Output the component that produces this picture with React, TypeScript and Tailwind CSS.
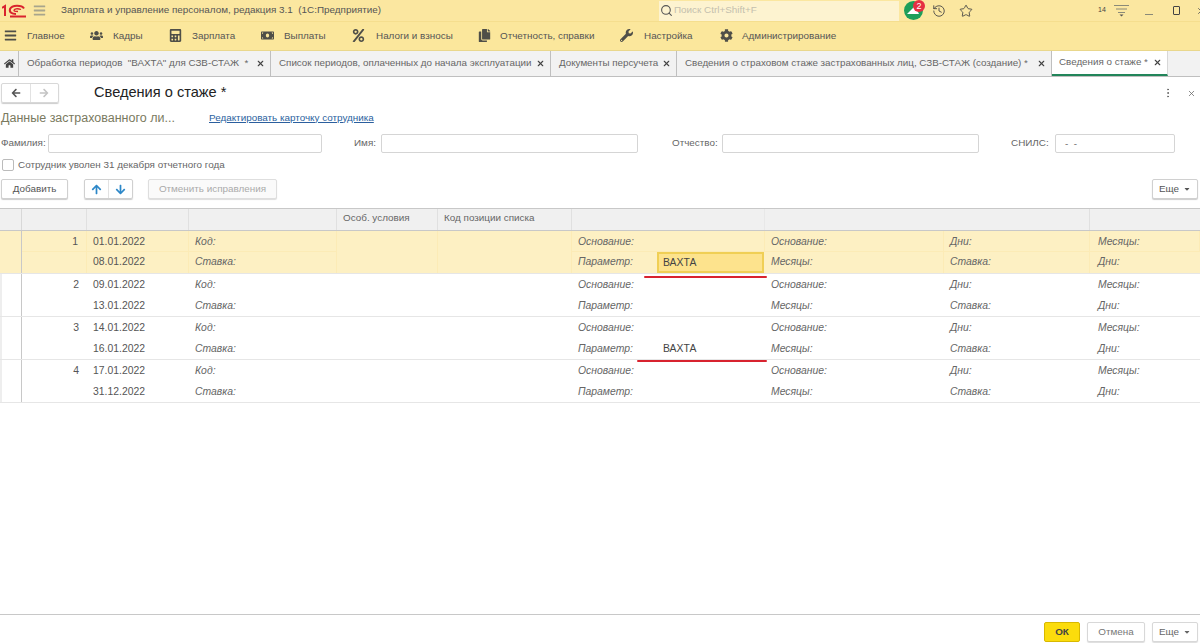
import { History, MoreVertical, Search, Star, X } from "lucide-react";
import { FaArrowDown, FaArrowLeft, FaArrowRight, FaArrowUp, FaBars, FaCalculator, FaCaretDown, FaCog, FaCopy, FaHome, FaMoneyBill, FaPercent, FaUsers, FaWrench } from "react-icons/fa";

const menuItems = [
  { label: "Главное", icon: FaBars, w: "w-[86px]", gap: "gap-[10px]" },
  { label: "Кадры", icon: FaUsers, w: "w-[79px]", gap: "gap-[10px]" },
  { label: "Зарплата", icon: FaCalculator, w: "w-[92px]", gap: "gap-[10px]" },
  { label: "Выплаты", icon: FaMoneyBill, w: "w-[91px]", gap: "gap-[10px]" },
  { label: "Налоги и взносы", icon: FaPercent, w: "w-[126px]", gap: "gap-[11px]" },
  { label: "Отчетность, справки", icon: FaCopy, w: "w-[142px]", gap: "gap-[9px]" },
  { label: "Настройка", icon: FaWrench, w: "w-[100px]", gap: "gap-[11px]" },
  { label: "Администрирование", icon: FaCog, w: "w-[130px]", gap: "gap-[9px]" },
];

const tabs = [
  { label: 'Обработка периодов  "ВАХТА" для СЗВ-СТАЖ  *', w: "w-[252px]" },
  { label: "Список периодов, оплаченных до начала эксплуатации", w: "w-[280px]" },
  { label: "Документы персучета", w: "w-[126px]" },
  { label: "Сведения о страховом стаже застрахованных лиц, СЗВ-СТАЖ (создание) *", w: "w-[375px]" },
];

const rows = [
  { n: "1", from: "01.01.2022", to: "08.01.2022", selected: true },
  { n: "2", from: "09.01.2022", to: "13.01.2022" },
  { n: "3", from: "14.01.2022", to: "16.01.2022", marked: true },
  { n: "4", from: "17.01.2022", to: "31.12.2022" },
];

const gridCols = "grid-cols-[22px_65px_102px_148px_101px_134px_193px_179px_146px_110px]";

function Label({ children }: { children: string }) {
  return <span className="italic text-[#666]">{children}</span>;
}

function Logo() {
  return (
    <svg width="24" height="14" viewBox="0 0 24 14" fill="none" stroke="#d9232e" strokeWidth="2">
      <path d="M0 4 L3 2 V12" />
      <path d="M22 4.5 C20 1 10 0.5 8 5 C7 8.5 10 10 14 10" />
      <path d="M19 5.5 C15 4 12 5 12 6.5 C12 7.5 14 7.5 16 7.5" strokeWidth="1.3" />
      <path d="M8 12.5 H24" />
    </svg>
  );
}

function Bell() {
  return (
    <div className="relative w-[19px] h-[19px] rounded-full bg-[#1e9e5a] flex items-center justify-center shrink-0">
      <svg width="13" height="12" viewBox="0 0 13 12" fill="#fff">
        <path d="M0 9 L8 1 L12 9 Z" />
      </svg>
      <span className="absolute -top-[1px] -right-[2px] w-[12px] h-[12px] rounded-full bg-[#e53042] text-white text-[9px] leading-[12px] text-center">2</span>
    </div>
  );
}

function FilterIcon() {
  return (
    <svg width="15" height="13" viewBox="0 0 15 13" fill="none" stroke="#8a8a78" strokeWidth="1" className="shrink-0">
      <path d="M0 1.5 H15 M2 5 H13 M4 8.5 H11" />
      <path d="M5.5 10.5 H9.5 L7.5 12.5 Z" fill="#555" stroke="none" />
    </svg>
  );
}

function TableRow({ row }: { row: (typeof rows)[number] }) {
  const line = row.selected ? "border-b border-r border-[#fcebb6]" : "";
  const plain = row.selected ? "border-r border-[#fcebb6]" : "";
  const second = row.selected ? "pt-[2px]" : "pt-[3px]";
  return (
    <div className={`grid ${gridCols} grid-rows-[21px_21px] h-[43px] border-b border-[#e6e6e6] text-[10.4px] text-[#555] ${row.selected ? "bg-[#fdf0c3]" : "bg-white"}`}>
      <div className={`row-span-2 border-r border-r-[#c8c8c8] border-l-2 ${row.selected ? "border-l-[#fdf0c3]" : "border-l-[#eeeeee]"}`} />
      <div className={`text-right pr-[8px] pt-[3px] ${line}`}>{row.n}</div>
      <div className={`pl-[6px] pt-[3px] ${line}`}>{row.from}</div>
      <div className={`pl-[6px] pt-[3px] ${line}`}><Label>Код:</Label></div>
      <div className={`row-span-2 ${plain}`} />
      <div className={`row-span-2 ${plain}`} />
      <div className={`pl-[6px] pt-[3px] ${line}`}><Label>Основание:</Label></div>
      <div className={`pl-[6px] pt-[3px] ${line}`}><Label>Основание:</Label></div>
      <div className={`pl-[6px] pt-[3px] ${line}`}><Label>Дни:</Label></div>
      <div className={`pl-[8px] pt-[3px] ${line}`}><Label>Месяцы:</Label></div>

      <div className={`col-start-2 ${plain}`} />
      <div className={`pl-[6px] ${second} ${plain}`}>{row.to}</div>
      <div className={`pl-[6px] ${second} ${plain}`}><Label>Ставка:</Label></div>
      <div className={`relative flex pl-[6px] ${second}`}>
        <Label>Параметр:</Label>
        {row.selected && (
          <div className="absolute left-[85px] top-[0px] w-[107px] h-[21px] bg-[#fde38d] border-2 border-[#f0cf55] pl-[4px] leading-[17px] text-[#444]">ВАХТА</div>
        )}
        {row.marked && <span className="absolute left-[91px] top-[3px] text-[#444]">ВАХТА</span>}
        {row.selected && <div className="absolute left-[72px] top-[24px] w-[123px] h-[2px] bg-[#d8232f] rounded-full" />}
        {row.marked && <div className="absolute left-[65px] top-[22px] w-[130px] h-[2px] bg-[#d8232f] rounded-full" />}
      </div>
      <div className={`pl-[6px] ${second} ${plain}`}><Label>Месяцы:</Label></div>
      <div className={`pl-[6px] ${second} ${plain}`}><Label>Ставка:</Label></div>
      <div className={`pl-[8px] ${second}`}><Label>Дни:</Label></div>
    </div>
  );
}

function Field({ w }: { w: string }) {
  return <div className={`${w} h-[19px] bg-white border border-[#d5d5d5] rounded-[2px] shrink-0`} />;
}

export default function App() {
  return (
    <div className="w-[1200px] h-[643px] flex flex-col overflow-hidden bg-white font-['Liberation_Sans',Arial,sans-serif] text-[9.9px] text-[#666]">
      {/* Title bar */}
      <div className="h-[22px] flex items-center bg-[#fbe7a0] border-b border-[#f5de8e] shrink-0">
        <div className="w-[33px] pl-[2px] flex shrink-0"><Logo /></div>
        <FaBars size={13} className="text-[#a8a58c] shrink-0" />
        <span className="ml-[15px] w-[598px] shrink-0 whitespace-pre text-[#555]">Зарплата и управление персоналом, редакция 3.1  (1С:Предприятие)</span>
        <div className="w-[240px] h-[20px] bg-[#fdf3d0] flex items-center text-[#c4c0ae] pl-[1px] shrink-0">
          <Search size={13} className="text-[#555] mr-[1px]" />
          Поиск Ctrl+Shift+F
        </div>
        <div className="ml-[5px] shrink-0"><Bell /></div>
        <History size={14} className="ml-[9px] text-[#444] shrink-0" strokeWidth={1.5} />
        <Star size={14} className="ml-[13px] text-[#444] shrink-0" strokeWidth={1.5} />
        <span className="ml-[125px] text-[7px] text-[#444] shrink-0">14</span>
        <div className="ml-[8px]"><FilterIcon /></div>
        <div className="ml-[16px] mt-[8px] w-[8px] h-[1px] bg-[#8a8a78] shrink-0" />
        <div className="ml-[20px] w-[7px] h-[9px] border border-[#444] rounded-[1px] shrink-0" />
        <X size={10} className="ml-[16px] text-[#555] shrink-0" />
      </div>

      {/* Section menu */}
      <div className="h-[29px] flex items-center bg-[#fbe79c] border-b border-[#e9d78c] shrink-0 pl-[4px]">
        {menuItems.map((item) => {
          const Icon = item.icon;
          return (
            <div key={item.label} className={`${item.w} ${item.gap} flex items-center shrink-0 text-[#555]`}>
              <Icon size={13} className="text-[#4f4f48] shrink-0" />
              <span className="whitespace-nowrap">{item.label}</span>
            </div>
          );
        })}
      </div>

      {/* Tabs */}
      <div className="h-[26px] flex bg-[#f2f2f2] border-b border-[#bfbfbf] shrink-0 text-[9.8px]">
        <div className="w-[19px] flex items-center justify-center border-r border-[#bfbfbf] shrink-0">
          <FaHome size={11} className="text-[#444]" />
        </div>
        {tabs.map((tab) => (
          <div key={tab.label} className={`${tab.w} flex items-center justify-between pl-[8px] pr-[5px] border-r border-[#bfbfbf] shrink-0`}>
            <span className="whitespace-pre">{tab.label}</span>
            <X size={9} className="text-[#444] shrink-0" strokeWidth={3} />
          </div>
        ))}
        <div className="w-[116px] flex items-center justify-between pl-[7px] pr-[5px] bg-white border-r border-[#d8d8d8] border-b-2 border-b-[#22855a] shrink-0">
          <span className="whitespace-pre">Сведения о стаже *</span>
          <X size={9} className="text-[#444] shrink-0" strokeWidth={3} />
        </div>
      </div>

      {/* Form header */}
      <div className="h-[30px] flex items-center pt-[2px] pl-[1px] pr-[4px] shrink-0">
        <div className="w-[58px] h-[20px] flex border border-[#d8d8d8] rounded-[2px] shadow-[0_1px_1px_#ccc] shrink-0">
          <div className="flex-1 flex items-center justify-center border-r border-[#e2e2e2]"><FaArrowLeft size={10} className="text-[#555]" /></div>
          <div className="flex-1 flex items-center justify-center"><FaArrowRight size={10} className="text-[#c4c4c4]" /></div>
        </div>
        <span className="ml-[35px] text-[14.6px] text-[#222]">Сведения о стаже *</span>
        <MoreVertical size={12} className="ml-auto text-[#666]" />
        <X size={9} className="ml-[13px] text-[#666]" />
      </div>

      {/* Employee block */}
      <div className="h-[22px] flex items-center pl-[1px] shrink-0">
        <span className="w-[208px] shrink-0 text-[12.5px] text-[#7a7a60]">Данные застрахованного ли...</span>
        <span className="text-[#2b5f9e] underline">Редактировать карточку сотрудника</span>
      </div>
      <div className="h-[28px] flex items-center pl-[1px] shrink-0">
        <span className="w-[47px] shrink-0">Фамилия:</span>
        <Field w="w-[274px]" />
        <span className="ml-[32px] w-[27px] shrink-0">Имя:</span>
        <Field w="w-[257px]" />
        <span className="ml-[34px] w-[50px] shrink-0">Отчество:</span>
        <Field w="w-[257px]" />
        <span className="ml-[32px] w-[44px] shrink-0">СНИЛС:</span>
        <div className="w-[120px] h-[19px] bg-white border border-[#d5d5d5] rounded-[2px] pl-[9px] leading-[17px] whitespace-pre shrink-0">-  -</div>
      </div>
      <div className="h-[16px] flex items-center pl-[2px] gap-[4px] shrink-0">
        <div className="w-[12px] h-[12px] border border-[#bbb] rounded-[2px] bg-white shrink-0" />
        <span>Сотрудник уволен 31 декабря отчетного года</span>
      </div>

      {/* Toolbar */}
      <div className="h-[35px] flex items-start pt-[6px] pl-[1px] pr-[2px] shrink-0">
        <button className="w-[67px] h-[20px] border border-[#d0d0d0] rounded-[2px] shadow-[0_1px_1px_#ccc] bg-white text-[#555]">Добавить</button>
        <div className="ml-[16px] w-[49px] h-[20px] flex border border-[#d0d0d0] rounded-[2px] shadow-[0_1px_1px_#ccc]">
          <div className="flex-1 flex items-center justify-center border-r border-[#e2e2e2]"><FaArrowUp size={11} className="text-[#2c87c8]" /></div>
          <div className="flex-1 flex items-center justify-center"><FaArrowDown size={11} className="text-[#2c87c8]" /></div>
        </div>
        <button className="ml-[15px] w-[129px] h-[20px] border border-[#dedede] rounded-[2px] shadow-[0_1px_1px_#ddd] bg-[#fafafa] text-[#aaa]">Отменить исправления</button>
        <button className="ml-auto w-[46px] h-[20px] flex items-center justify-center gap-[4px] border border-[#d0d0d0] rounded-[2px] shadow-[0_1px_1px_#ccc] bg-white text-[#555]">
          Еще <FaCaretDown size={8} />
        </button>
      </div>

      {/* Table */}
      <div className="flex-1 border-t border-[#c8c8c8]">
        <div className={`grid ${gridCols} h-[22px] bg-[#f0f0f0] border-b border-[#c8c8c8]`}>
          <div className="border-r border-[#d8d8d8]" />
          <div className="border-r border-[#e0e0e0]" />
          <div className="border-r border-[#e0e0e0]" />
          <div className="border-r border-[#e0e0e0]" />
          <div className="border-r border-[#e0e0e0] pl-[6px] leading-[18px]">Особ. условия</div>
          <div className="border-r border-[#e0e0e0] pl-[6px] leading-[18px]">Код позиции списка</div>
          <div className="border-r border-[#e8e8e8]" />
          <div className="col-span-2 border-r border-[#e0e0e0]" />
          <div />
        </div>
        {rows.map((row) => (
          <TableRow key={row.n} row={row} />
        ))}
      </div>

      {/* Footer */}
      <div className="h-[29px] flex items-start pt-[7px] justify-end gap-[7px] pr-[2px] shrink-0 border-t border-[#c8c8c8]">
        <button className="w-[36px] h-[20px] bg-[#fbdc0c] border border-[#d8b800] rounded-[2px] font-bold text-[#444]">ОК</button>
        <button className="w-[58px] h-[20px] border border-[#d8d8d8] rounded-[2px] shadow-[0_1px_1px_#ddd] bg-white text-[#777]">Отмена</button>
        <button className="w-[46px] h-[20px] flex items-center justify-center gap-[4px] border border-[#d8d8d8] rounded-[2px] shadow-[0_1px_1px_#ddd] bg-white text-[#666]">
          Еще <FaCaretDown size={8} />
        </button>
      </div>
    </div>
  );
}
